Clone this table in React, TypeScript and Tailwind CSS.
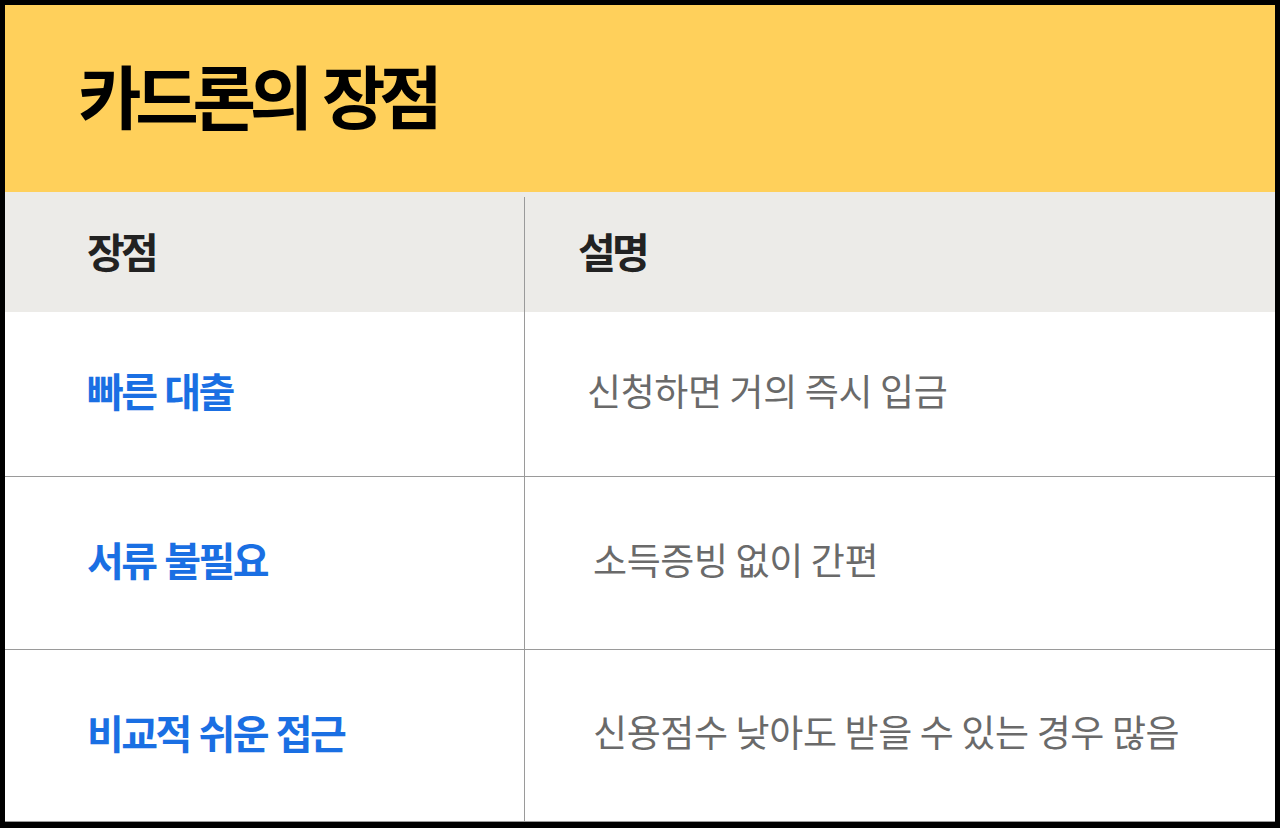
const FONT = '"Noto Sans CJK KR", "Noto Sans", sans-serif';

const ROWS = [
  { title: '빠른 대출', desc: '신청하면 거의 즉시 입금', h: 'h-[165px]', pad: 'pl-[62px]' },
  { title: '서류 불필요', desc: '소득증빙 없이 간편', h: 'h-[173px]', pad: 'pl-[68px]' },
  { title: '비교적 쉬운 접근', desc: '신용점수 낮아도 받을 수 있는 경우 많음', h: 'h-[172px]', pad: 'pl-[68px]' },
];

export default function App() {
  return (
    <div
      className="w-[1280px] h-[828px] bg-black pt-[5px] px-[5px] pb-[6px]"
      style={{ fontFamily: FONT }}
    >
      <div className="h-full flex flex-col bg-white">
        {/* title bar */}
        <div className="h-[187px] bg-[#ffd05b] flex items-center pl-[73px] pb-[8px]">
          <h1 className="text-[69px] font-bold text-black tracking-[-0.09em] [word-spacing:0.08em] leading-none">
            카드론의 장점
          </h1>
        </div>

        {/* table head */}
        <div className="h-[120px] flex bg-[#ecebe8]">
          <div className="w-[519px] flex items-center pl-[82px] pb-[4px]">
            <span className="text-[41px] font-bold text-[#222] tracking-[-0.09em] leading-none">장점</span>
          </div>
          <div className="w-px mt-[5px] bg-[#9a9a9a]" />
          <div className="flex-1 flex items-center pl-[53px] pb-[4px]">
            <span className="text-[41px] font-bold text-[#222] tracking-[-0.09em] leading-none">설명</span>
          </div>
        </div>

        {/* rows */}
        {ROWS.map((row) => (
          <div key={row.title} className={`${row.h} flex border-b border-[#9a9a9a]`}>
            <div className="w-[520px] flex items-center pl-[82px] pb-[8px] border-r border-[#9a9a9a]">
              <span className="text-[40px] font-semibold text-[#1a6fe3] tracking-[-0.065em] [word-spacing:0.06em] leading-none">
                {row.title}
              </span>
            </div>
            <div className={`flex-1 flex items-center pb-[8px] ${row.pad}`}>
              <span className="text-[37px] text-[#6a6a6a] tracking-[-0.01em] leading-none">
                {row.desc}
              </span>
            </div>
          </div>
        ))}
      </div>
    </div>
  );
}
